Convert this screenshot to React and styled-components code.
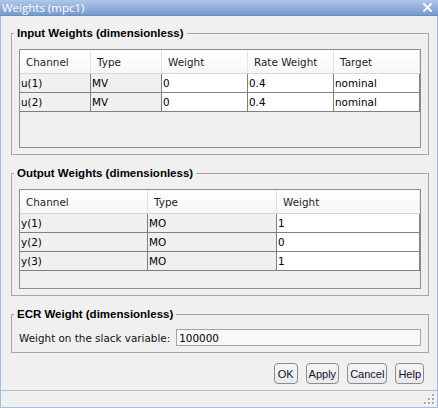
import React from 'react';
import styled, { createGlobalStyle } from 'styled-components';

const GlobalStyle = createGlobalStyle`
  html, body {
    margin: 0;
    padding: 0;
    background: #f0f0f0;
  }
  body {
    width: 438px;
    height: 408px;
    overflow: hidden;
  }
`;

const inputColumns = [
  { title: 'Channel', width: 71, edit: false },
  { title: 'Type', width: 71, edit: false },
  { title: 'Weight', width: 86, edit: true },
  { title: 'Rate Weight', width: 86, edit: true },
  { title: 'Target', width: 86, edit: true },
];

const inputRows = [
  ['u(1)', 'MV', '0', '0.4', 'nominal'],
  ['u(2)', 'MV', '0', '0.4', 'nominal'],
];

const outputColumns = [
  { title: 'Channel', width: 128, edit: false },
  { title: 'Type', width: 129, edit: false },
  { title: 'Weight', width: 143, edit: true },
];

const outputRows = [
  ['y(1)', 'MO', '1'],
  ['y(2)', 'MO', '0'],
  ['y(3)', 'MO', '1'],
];

function GridTable({ columns, rows, height }) {
  const template = columns.map((c) => c.width + 'px').join(' ');
  return (
    <Table $height={height}>
      <HeaderRow $cols={template}>
        {columns.map((c) => (
          <HeaderCell key={c.title}>{c.title}</HeaderCell>
        ))}
      </HeaderRow>
      {rows.map((row, i) => (
        <DataRow key={i} $cols={template}>
          {row.map((value, j) => (
            <DataCell key={j} $edit={columns[j].edit}>
              {value}
            </DataCell>
          ))}
        </DataRow>
      ))}
    </Table>
  );
}

function SizeGrip() {
  const dots = [
    [8, 0],
    [4, 4],
    [8, 4],
    [0, 8],
    [4, 8],
    [8, 8],
  ];
  return (
    <GripSvg width="11" height="11" viewBox="0 0 11 11">
      {dots.map(([x, y]) => (
        <g key={x + '-' + y}>
          <rect x={x + 1} y={y + 1} width="2" height="2" fill="#ffffff" />
          <rect x={x} y={y} width="2" height="2" fill="#a7a7a7" />
        </g>
      ))}
    </GripSvg>
  );
}

export default function App() {
  return (
    <>
      <GlobalStyle />
      <Window>
        <TitleBar>
          <span>Weights (mpc1)</span>
          <svg width="9" height="9" viewBox="0 0 9 9">
            <path d="M1 1 L8 8 M8 1 L1 8" stroke="#ffffff" strokeWidth="1.8" strokeLinecap="square" />
          </svg>
        </TitleBar>
        <Frame>
          <Content>
            <Group>
              <Legend>Input Weights (dimensionless)</Legend>
              <GridTable columns={inputColumns} rows={inputRows} height={99} />
            </Group>
            <Group>
              <Legend>Output Weights (dimensionless)</Legend>
              <GridTable columns={outputColumns} rows={outputRows} height={100} />
            </Group>
            <Group $compact>
              <Legend>ECR Weight (dimensionless)</Legend>
              <FieldRow>
                <Label>Weight on the slack variable:</Label>
                <TextField>100000</TextField>
              </FieldRow>
            </Group>
            <ButtonRow>
              <Button>OK</Button>
              <Button>Apply</Button>
              <Button>Cancel</Button>
              <Button>Help</Button>
            </ButtonRow>
          </Content>
          <StatusBar>
            <SizeGrip />
          </StatusBar>
        </Frame>
      </Window>
    </>
  );
}

const Window = styled.div`
  width: 438px;
  height: 408px;
  display: flex;
  flex-direction: column;
  background: #f0f0f0;
  font-family: "DejaVu Sans", sans-serif;
  font-size: 10.4px;
  color: #000;
`;

const TitleBar = styled.div`
  flex: none;
  height: 15px;
  display: flex;
  align-items: center;
  justify-content: space-between;
  padding: 0 6px 0 2px;
  background: linear-gradient(#aec8e9, #7699cd);
  border-bottom: 1px solid #6a8ec2;
  color: #ffffff;
  font-family: "Open Sans", sans-serif;
  font-size: 11.5px;
  svg {
    display: block;
  }
`;

const Frame = styled.div`
  flex: 1;
  display: flex;
  flex-direction: column;
  border: 1px solid #a3bedf;
  border-top: none;
`;

const Content = styled.div`
  flex: 1;
  display: flex;
  flex-direction: column;
  padding: 10px 8px 0 10px;
`;

const Group = styled.fieldset`
  margin: 0 0 11px 0;
  padding: ${(p) => (p.$compact ? '8px 7px 6px 7px' : '9px 7px 6px 7px')};
  border: 1px solid #a5a5a5;
  min-width: 0;
`;

const Legend = styled.legend`
  margin-left: -5px;
  padding: 0 3px;
  font-family: "Liberation Sans", Arial, sans-serif;
  font-weight: bold;
  font-size: 11.5px;
  line-height: 14px;
  color: #000;
`;

const Table = styled.div`
  height: ${(p) => p.$height}px;
  box-sizing: border-box;
  border: 1px solid #8d8d8d;
  background: #f0f0f0;
  overflow: hidden;
`;

const HeaderRow = styled.div`
  display: grid;
  grid-template-columns: ${(p) => p.$cols};
  height: 24px;
  box-sizing: border-box;
  border-bottom: 1px solid #d6d6d6;
  background: linear-gradient(#ffffff, #f6f7f8);
`;

const HeaderCell = styled.div`
  display: flex;
  align-items: center;
  padding-left: 6px;
  border-right: 1px solid #e4e4e4;
  color: #1c1c2c;
  white-space: nowrap;
`;

const DataRow = styled.div`
  display: grid;
  grid-template-columns: ${(p) => p.$cols};
  height: 19px;
  box-sizing: border-box;
  border-bottom: 1px solid #808080;
`;

const DataCell = styled.div`
  display: flex;
  align-items: center;
  padding-left: 1px;
  border-right: 1px solid #808080;
  background: ${(p) => (p.$edit ? '#ffffff' : '#f0f0f0')};
  white-space: nowrap;
`;

const FieldRow = styled.div`
  display: flex;
  align-items: center;
  gap: 6px;
`;

const Label = styled.span`
  white-space: nowrap;
  color: #111;
`;

const TextField = styled.div`
  flex: 1;
  height: 17px;
  box-sizing: border-box;
  display: flex;
  align-items: center;
  padding-left: 2px;
  background: #f8f8f8;
  border: 1px solid #a4a4a4;
`;

const ButtonRow = styled.div`
  display: flex;
  justify-content: flex-end;
  gap: 8px;
  margin-top: -1px;
  margin-right: 5px;
`;

const Button = styled.div`
  height: 21px;
  min-width: 24px;
  box-sizing: border-box;
  display: flex;
  align-items: center;
  justify-content: center;
  padding: 0 2px;
  border: 1px solid #8c8c8c;
  border-radius: 4px;
  background: linear-gradient(#f6f6f6, #e9e9e9);
  font-family: "Liberation Sans", Arial, sans-serif;
  font-size: 11px;
  color: #101030;
`;

const StatusBar = styled.div`
  flex: none;
  height: 17px;
  box-sizing: border-box;
  border-top: 1px solid #a9c1de;
  display: flex;
  justify-content: flex-end;
  align-items: flex-end;
  padding: 0 2px 2px 0;
`;

const GripSvg = styled.svg`
  display: block;
`;
